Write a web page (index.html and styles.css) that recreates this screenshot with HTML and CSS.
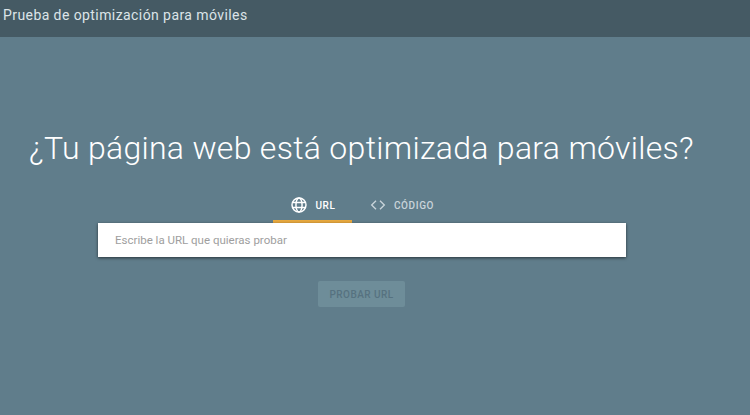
FILE: index.html
```html
<!DOCTYPE html>
<html lang="es">

<head>
    <meta charset="utf-8" />
    <title>Prueba de optimización para móviles</title>
    <link rel="stylesheet" href="styles.css">
</head>

<body>
    <header class="bar">
        <span class="bar-title">Prueba de optimización para móviles</span>
    </header>
    <main class="hero">
        <h1>¿Tu página web está optimizada para móviles?</h1>
        <div class="tabs">
            <div class="tab active">
                <svg class="tab-icon" viewBox="0 0 24 24" width="16" height="16" fill="none" stroke="currentColor" stroke-width="2.2">
                    <circle cx="12" cy="12" r="10.5" />
                    <ellipse cx="12" cy="12" rx="4.6" ry="10.5" />
                    <path d="M2 8.2h20M2 15.8h20" />
                </svg>
                <span>URL</span>
            </div>
            <div class="tab">
                <svg class="tab-icon" viewBox="0 0 24 24" width="16" height="16" fill="none" stroke="currentColor" stroke-width="2">
                    <path d="M9 5.5 2.5 12 9 18.5M15 5.5l6.500 6.500-6.500 6.500" />
                </svg>
                <span>CÓDIGO</span>
            </div>
        </div>
        <div class="search">
            <input type="text" placeholder="Escribe la URL que quieras probar" />
        </div>
        <button type="button" class="run" disabled>PROBAR URL</button>
    </main>
</body>

</html>
```

FILE: styles.css
```css
body {
    margin: 0;
    height: 415px;
    overflow: hidden;
    display: flex;
    flex-direction: column;
    font-family: Roboto, "Liberation Sans", sans-serif;
    background: #607d8b;
    color: #fff;
}

.bar {
    height: 37px;
    flex: none;
    background: #455a64;
    box-sizing: border-box;
    padding: 5px 0 0 3px;
}

.bar-title {
    font-size: 14px;
    line-height: 17px;
    letter-spacing: 0.42px;
    color: #dce4e8;
}

.hero {
    display: flex;
    flex-direction: column;
    align-items: center;
    flex: 1;
    padding-right: 26px;
}

h1 {
    align-self: flex-start;
    margin: 91px 0 0;
    padding-left: 29px;
    font-size: 32px;
    line-height: 40px;
    font-weight: 300;
    letter-spacing: 0.3px;
    white-space: nowrap;
}

.tabs {
    display: flex;
    margin-top: 22px;
    width: 528px;
    padding-left: 175px;
    box-sizing: border-box;
}

.tab {
    display: flex;
    align-items: center;
    justify-content: center;
    gap: 8px;
    height: 33px;
    box-sizing: border-box;
    font-size: 10px;
    font-weight: 500;
    letter-spacing: 0.6px;
    color: #c9d4da;
    width: 79px;
    border-bottom: 3px solid transparent;
}

.tab.active {
    padding-left: 2px;
    color: #fff;
    border-bottom-color: #e8a93f;
}

.tab + .tab {
    margin-left: 5px;
    width: 90px;
}

.search {
    width: 528px;
    height: 34px;
    background: #fff;
    box-shadow: 0 1px 3px rgba(0, 0, 0, 0.6);
}

.search input {
    width: 100%;
    height: 100%;
    box-sizing: border-box;
    border: none;
    outline: none;
    padding: 0 17px;
    font-family: inherit;
    font-size: 11.5px;
    background: transparent;
}

.search input::placeholder {
    color: #9e9e9e;
    opacity: 1;
}

.run {
    margin: 24px 1px 0 0;
    width: 87px;
    height: 26px;
    border: none;
    border-radius: 2px;
    padding: 0;
    background: #6e8d99;
    color: #567280;
    font-family: inherit;
    font-size: 10px;
    font-weight: 500;
    letter-spacing: 0.45px;
}
```
